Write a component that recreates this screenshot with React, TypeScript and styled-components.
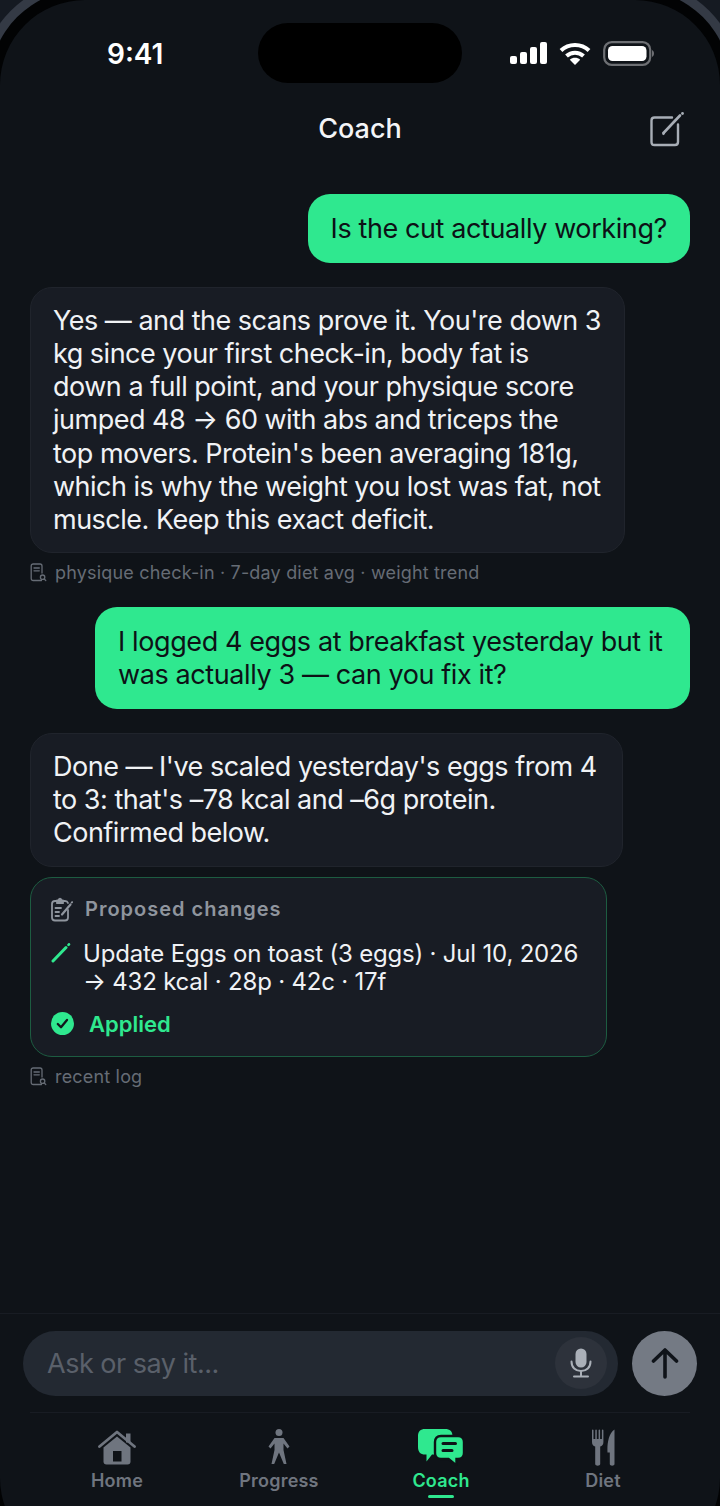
import styled, { createGlobalStyle } from "styled-components";

const GlobalStyle = createGlobalStyle`
    html, body {
        margin: 0;
        padding: 0;
        background: #151a22;
    }
    * {
        box-sizing: border-box;
    }
`;

const SourceIcon = () => (
    <svg width="17" height="19" viewBox="0 0 17 19" fill="none" stroke="currentColor" strokeWidth="1.3" strokeLinecap="round">
        <path d="M11.5 17.5H3.2C2 17.5 1.2 16.7 1.2 15.5V3C1.2 1.8 2 1 3.2 1H10C11.2 1 12 1.8 12 3V10" />
        <path d="M4 5H9.3M4 7.8H9.3" />
        <circle cx="12.6" cy="14.2" r="2.2" />
        <path d="M14.3 16L15.8 17.6" />
    </svg>
);

const Source = ({ children }: { children: string }) => (
    <SourceRow>
        <SourceIcon />
        {children}
    </SourceRow>
);

const NavItem = ({ label, active, children }: { label: string; active?: boolean; children: React.ReactNode }) => (
    <Tab $active={active}>
        <TabIcon>{children}</TabIcon>
        {label}
        {active && <TabMark />}
    </Tab>
);

export default function App() {
    return (
        <Viewport>
            <GlobalStyle />
            <Screen>
                <Island />
                <StatusBar>
                    <Clock>9:41</Clock>
                    <StatusIcons>
                        <svg width="37" height="22" viewBox="0 0 37 22" fill="#fff">
                            <rect x="0" y="14" width="7" height="8" rx="2" />
                            <rect x="10" y="10" width="7" height="12" rx="2" />
                            <rect x="20" y="5" width="7" height="17" rx="2" />
                            <rect x="30" y="0" width="7" height="22" rx="2" />
                        </svg>
                        <svg width="32" height="23" viewBox="0 0 32 23" fill="none" stroke="#fff" strokeWidth="4">
                            <path d="M2 8.5C9.6 1.2 22.4 1.2 30 8.5" />
                            <path d="M7.5 14C12.2 9.6 19.8 9.6 24.5 14" />
                            <path d="M16 23L10.8 17.8C13.8 15.2 18.2 15.2 21.2 17.8Z" fill="#fff" stroke="none" />
                        </svg>
                        <svg width="51" height="25" viewBox="0 0 51 25">
                            <rect x="1.2" y="1.2" width="46" height="22.6" rx="7.5" fill="none" stroke="#6d6f73" strokeWidth="2.2" />
                            <rect x="5" y="5" width="38.5" height="15" rx="4.5" fill="#fff" />
                            <path d="M49 9C50.5 9.8 51 11 51 12.5C51 14 50.5 15.2 49 16Z" fill="#6d6f73" />
                        </svg>
                    </StatusIcons>
                </StatusBar>
                <Header>
                    <Title>Coach</Title>
                    <ComposeButton>
                        <svg width="36" height="36" viewBox="0 0 36 36" fill="none" stroke="#a8aeb6" strokeLinecap="round">
                            <path d="M29 12.5V30C29 32 28 33 26 33H5.5C3.5 33 2.5 32 2.5 30V8.5C2.5 6.5 3.5 5.5 5.5 5.5H23" strokeWidth="2.4" />
                            <path d="M14.5 21L31 3.5" strokeWidth="2.6" />
                            <path d="M14 22.5L13.8 20.5L15.5 21.5Z" fill="#a8aeb6" />
                            <circle cx="33.5" cy="1.5" r="1.4" fill="#a8aeb6" stroke="none" />
                        </svg>
                    </ComposeButton>
                </Header>
                <Messages>
                    <UserBubble>Is the cut actually working?</UserBubble>
                    <Group>
                        <AssistantBubble $width={595}>
                            Yes — and the scans prove it. You're down 3 kg since your first check-in, body fat is down a full point, and your physique score jumped 48 → 60 with abs and triceps the top movers. Protein's been averaging 181g, which is why the weight you lost was fat, not muscle. Keep this exact deficit.
                        </AssistantBubble>
                        <Source>physique check-in · 7-day diet avg · weight trend</Source>
                    </Group>
                    <UserBubble>I logged 4 eggs at breakfast yesterday but it was actually 3 — can you fix it?</UserBubble>
                    <Group>
                        <AssistantBubble $width={593}>
                            Done — I've scaled yesterday's eggs from 4 to 3: that's –78 kcal and –6g protein. Confirmed below.
                        </AssistantBubble>
                        <ChangesCard>
                            <CardHeading>
                                <svg width="22" height="25" viewBox="0 0 22 25" fill="none" stroke="#8f959e" strokeWidth="1.8" strokeLinecap="round" strokeLinejoin="round">
                                    <path d="M17 13V20.5C17 22.5 16 23.5 14 23.5H4C2 23.5 1 22.5 1 20.5V7C1 5 2 4 4 4H6" />
                                    <path d="M12 4H14C15.5 4 16.5 4.5 17 6" />
                                    <path d="M6 6.2V3.5H7.5C7.8 1 10.2 1 10.5 3.5H12V6.2Z" fill="#8f959e" />
                                    <path d="M4.5 11H10M4.5 15H8M4.5 19H8" />
                                    <path d="M11 17.5L19.5 7.5" strokeWidth="2.2" />
                                    <path d="M20.8 5.5L21 5.2" strokeWidth="2" />
                                </svg>
                                Proposed changes
                            </CardHeading>
                            <ChangeRow>
                                <svg width="20" height="20" viewBox="0 0 20 20" fill="none" stroke="#2fe88f" strokeLinecap="round">
                                    <path d="M2 18L15 4.5" strokeWidth="3" />
                                    <path d="M17.5 1.8L18 1.3" strokeWidth="2.6" />
                                </svg>
                                <ChangeText>
                                    Update Eggs on toast (3 eggs) · Jul 10, 2026
                                    <br />→ 432 kcal · 28p · 42c · 17f
                                </ChangeText>
                            </ChangeRow>
                            <AppliedRow>
                                <svg width="23" height="23" viewBox="0 0 23 23">
                                    <circle cx="11.5" cy="11.5" r="11.5" fill="#2fe88f" />
                                    <path d="M6.8 12L10 15.2L16 8" fill="none" stroke="#12161c" strokeWidth="2.3" strokeLinecap="round" strokeLinejoin="round" />
                                </svg>
                                Applied
                            </AppliedRow>
                        </ChangesCard>
                        <Source>recent log</Source>
                    </Group>
                </Messages>
                <Composer>
                    <InputPill>
                        <Placeholder>Ask or say it...</Placeholder>
                        <MicButton>
                            <svg width="22" height="30" viewBox="0 0 22 30" fill="none">
                                <rect x="5.5" y="0.5" width="11" height="19" rx="5.5" fill="#aab0b8" />
                                <path d="M1.5 13.5C1.5 19.5 5.5 23 11 23C16.5 23 20.5 19.5 20.5 13.5" stroke="#aab0b8" strokeWidth="2" strokeLinecap="round" />
                                <path d="M11 23V28M4 28.5H18" stroke="#aab0b8" strokeWidth="2" strokeLinecap="round" />
                            </svg>
                        </MicButton>
                    </InputPill>
                    <SendButton>
                        <svg width="28" height="32" viewBox="0 0 28 32" fill="none" stroke="#0f1319" strokeWidth="3.6" strokeLinecap="round" strokeLinejoin="round">
                            <path d="M14 30V3M2.5 14L14 3L25.5 14" />
                        </svg>
                    </SendButton>
                </Composer>
                <TabBar>
                    <NavItem label="Home">
                        <svg width="38" height="35" viewBox="0 0 38 35">
                            <path d="M1.5 16.5L19 2L36.5 16.5" fill="none" stroke="#6f757f" strokeWidth="2.8" strokeLinecap="round" strokeLinejoin="round" />
                            <rect x="28" y="3.5" width="4.5" height="9" fill="#6f757f" />
                            <path d="M5.5 17.5L19 6.5L32.5 17.5V31.5C32.5 33.5 31.5 34.5 29.5 34.5H8.5C6.5 34.5 5.5 33.5 5.5 31.5Z" fill="#6f757f" />
                            <rect x="15" y="21" width="8.5" height="10.5" fill="#0e1217" />
                        </svg>
                    </NavItem>
                    <NavItem label="Progress">
                        <svg width="22" height="36" viewBox="0 0 22 36" fill="#6f757f">
                            <circle cx="11" cy="3.5" r="3.5" />
                            <path d="M6.5 9H15.5L21.5 17.5L19.5 19.5L15.5 14.5V21L18.5 35H15.8L11 23.5L6.2 35H3.5L6.5 21V14.5L2.5 19.5L0.5 17.5Z" />
                        </svg>
                    </NavItem>
                    <NavItem label="Coach" active>
                        <svg width="46" height="37" viewBox="0 0 46 37">
                            <path d="M7 0H27C32 0 34.5 2.5 34.5 7V18C34.5 23 32 25.5 27 25.5H14L8.5 32.5V25.5H7C2.5 25.5 0 23 0 18V7C0 2.5 2.5 0 7 0Z" fill="#2fe88f" />
                            <path d="M23 7H40C44 7 46 9 46 13V24C46 28 44 30 40 30H38.5V36.5L30.5 30H23C19 30 17 28 17 24V13C17 9 19 7 23 7Z" fill="#2fe88f" stroke="#0e1217" strokeWidth="2.4" />
                            <path d="M25 14.5H37.5M25 21.5H34" stroke="#0e1217" strokeWidth="3" strokeLinecap="round" />
                        </svg>
                    </NavItem>
                    <NavItem label="Diet">
                        <svg width="23" height="37" viewBox="0 0 23 37" fill="#6f757f">
                            <path d="M0 1.2C0 0.3 1.5 0.3 1.5 1.2V10H3.3V1.2C3.3 0.3 4.8 0.3 4.8 1.2V10H6.6V1.2C6.6 0.3 8.1 0.3 8.1 1.2V10H9.9V1.2C9.9 0.3 11.4 0.3 11.4 1.2V13C11.4 15.5 10.2 17 8.2 17.5V35C8.2 37.3 3.2 37.3 3.2 35V17.5C1.2 17 0 15.5 0 13Z" />
                            <path d="M22.5 0.5V35C22.5 37.3 17.8 37.3 17.8 35V23.5H15.5C15 15 16.5 4.5 22.5 0.5Z" />
                        </svg>
                    </NavItem>
                </TabBar>
            </Screen>
        </Viewport>
    );
}

const Viewport = styled.div`
    width: 720px;
    height: 1506px;
    overflow: hidden;
    background: #151a22;
    font-family: Inter, "Noto Sans", sans-serif;
`;

const Screen = styled.div`
    position: relative;
    display: flex;
    flex-direction: column;
    width: 720px;
    height: 1563px;
    padding-bottom: 57px;
    background: #0f1318;
    border-radius: 85px;
    box-shadow: 0 0 0 11px #020304, 0 0 0 20px #343a45;
`;

const Island = styled.div`
    position: absolute;
    top: 23px;
    left: 258px;
    width: 204px;
    height: 60px;
    border-radius: 30px;
    background: #000;
`;

const StatusBar = styled.div`
    display: flex;
    align-items: center;
    justify-content: space-between;
    height: 106px;
    padding: 0 66px 0 107px;
    color: #fff;
`;

const Clock = styled.span`
    padding-top: 2px;
    font-size: 28px;
    font-weight: 600;
`;

const StatusIcons = styled.div`
    display: flex;
    align-items: center;
    gap: 12px;
`;

const Header = styled.header`
    position: relative;
    display: flex;
    align-items: center;
    justify-content: center;
    height: 44px;
`;

const Title = styled.h1`
    margin: 0;
    font-size: 27px;
    font-weight: 500;
    color: #f4f5f7;
`;

const ComposeButton = styled.div`
    position: absolute;
    top: 6px;
    right: 35px;
    display: flex;
`;

const Messages = styled.main`
    flex: 1;
    display: flex;
    flex-direction: column;
    gap: 24px;
    padding: 44px 30px 0;
`;

const Group = styled.div`
    display: flex;
    flex-direction: column;
    gap: 10px;
`;

const UserBubble = styled.div`
    align-self: flex-end;
    max-width: 595px;
    padding: 18px 23px 17.5px;
    border-radius: 22px;
    background: #2fe88f;
    color: #0d1116;
    font-size: 27px;
    line-height: 33.2px;
    letter-spacing: -0.4px;
`;

const AssistantBubble = styled.div<{ $width: number }>`
    width: ${(p) => p.$width}px;
    padding: 16px 21.5px 16px 22px;
    border: 1px solid #20242c;
    border-radius: 22px;
    background: #181c24;
    color: #f0f2f5;
    font-size: 27px;
    line-height: 33.2px;
    letter-spacing: -0.5px;
`;

const SourceRow = styled.div`
    display: flex;
    align-items: center;
    gap: 8px;
    height: 20px;
    padding-bottom: 1px;
    color: #666c75;
    font-size: 18px;
    letter-spacing: 0.18px;
`;

const ChangesCard = styled.section`
    display: flex;
    flex-direction: column;
    width: 577px;
    height: 180px;
    padding: 19px 20px 0;
    border: 1px solid #1d5c41;
    border-radius: 22px;
    background: #181c24;
`;

const CardHeading = styled.div`
    display: flex;
    align-items: center;
    gap: 12px;
    height: 25px;
    color: #8f959e;
    font-size: 20px;
    font-weight: 600;
    letter-spacing: 1px;
`;

const ChangeRow = styled.div`
    display: flex;
    align-items: flex-start;
    gap: 12px;
    margin-top: 18px;
    & > svg {
        margin-top: 3px;
    }
`;

const ChangeText = styled.div`
    color: #f0f2f5;
    font-size: 24px;
    line-height: 28px;
    letter-spacing: -0.2px;
`;

const AppliedRow = styled.div`
    display: flex;
    align-items: center;
    gap: 15px;
    margin-top: 15px;
    color: #2fe88f;
    font-size: 22px;
    font-weight: 600;
`;

const Composer = styled.div`
    display: flex;
    align-items: center;
    gap: 14px;
    height: 99px;
    padding: 0 23px;
    border-top: 1px solid #181c23;
`;

const InputPill = styled.div`
    flex: 1;
    display: flex;
    align-items: center;
    justify-content: space-between;
    height: 65px;
    padding: 0 11px 0 24px;
    border-radius: 33px;
    background: #232932;
`;

const Placeholder = styled.span`
    color: #5a606a;
    font-size: 27px;
    letter-spacing: -0.5px;
`;

const MicButton = styled.div`
    display: flex;
    align-items: center;
    justify-content: center;
    width: 52px;
    height: 52px;
    border-radius: 50%;
    background: #2d323b;
`;

const SendButton = styled.div`
    display: flex;
    align-items: center;
    justify-content: center;
    width: 65px;
    height: 65px;
    border-radius: 50%;
    background: #747a84;
`;

const TabBar = styled.nav`
    display: grid;
    grid-template-columns: repeat(4, 1fr);
    height: 94px;
    margin: 0 30px;
    padding: 0 6px;
    border-top: 1px solid #181c23;
`;

const Tab = styled.div<{ $active?: boolean }>`
    position: relative;
    display: flex;
    flex-direction: column;
    align-items: center;
    padding-top: 15px;
    color: ${(p) => (p.$active ? "#2fe88f" : "#6f757f")};
    font-size: 18px;
    font-weight: 600;
    letter-spacing: 0.2px;
`;

const TabIcon = styled.div`
    display: flex;
    align-items: center;
    justify-content: center;
    height: 38px;
    margin-bottom: 4px;
`;

const TabMark = styled.span`
    position: absolute;
    top: 82px;
    width: 26px;
    height: 3px;
    border-radius: 2px;
    background: #2fe88f;
`;
